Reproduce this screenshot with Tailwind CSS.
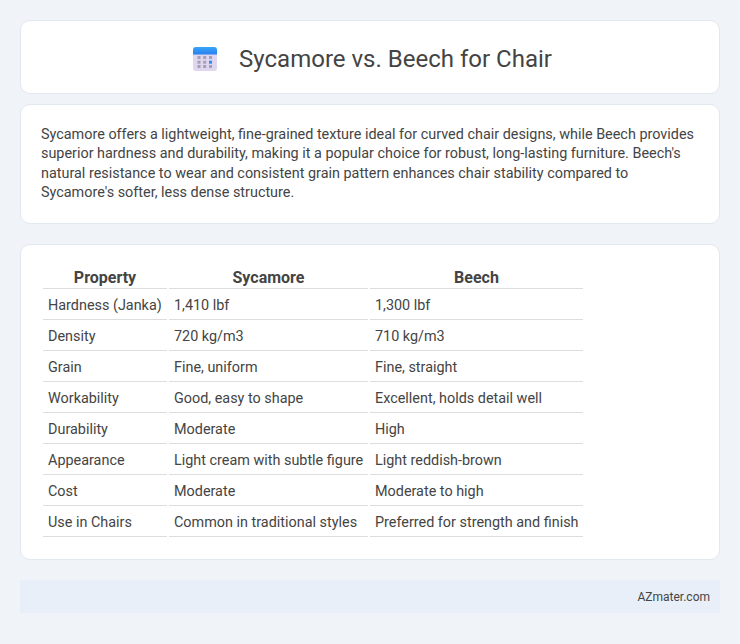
<!DOCTYPE html>
<html lang="en">
  <head>
    <meta charset="UTF-8" />
    <meta name="viewport" content="width=device-width, initial-scale=1.0" />
    <title>Sycamore vs. Beech for Chair</title>
    <script src="https://cdn.jsdelivr.net/npm/@tailwindcss/browser@4"></script>
  </head>
  <body class="bg-[#f0f4f9] font-['Roboto',sans-serif] text-[#444444] px-5 pt-5 h-[644px] overflow-hidden">
    <!-- title -->
    <div class="bg-white border border-[#e2e8f0] rounded-[10px] h-[74px] pt-1 flex items-center justify-center">
      <svg class="w-[26px] h-[26px] ml-1 mr-[21px]" viewBox="0 0 26 26">
        <defs>
          <linearGradient id="band" x1="0" y1="0" x2="0" y2="1">
            <stop offset="0" stop-color="#38a5f8" />
            <stop offset="1" stop-color="#2a7ff0" />
          </linearGradient>
        </defs>
        <rect x="1" y="1" width="24" height="24" rx="3" fill="#dfd6ef" />
        <path d="M1 8.500V4A3 3 0 0 1 4 1h18A3 3 0 0 1 25 4V8.500Z" fill="url(#band)" />
        <g fill="#a5a1b2">
          <rect x="5.500" y="10" width="3" height="3" />
          <rect x="11.200" y="10" width="3" height="3" />
          <rect x="17" y="10" width="3" height="3" />
          <rect x="5.500" y="14.700" width="3" height="3" />
          <rect x="11.200" y="14.700" width="3" height="3" />
          <rect x="17" y="14.700" width="3" height="3" fill="#2b8cf5" />
          <rect x="5.500" y="19" width="3" height="3" />
          <rect x="11.200" y="19" width="3" height="3" />
          <rect x="17" y="19" width="3" height="3" />
        </g>
      </svg>
      <h1 class="text-[24px] font-normal leading-none">Sycamore vs. Beech for Chair</h1>
    </div>

    <!-- summary -->
    <div class="bg-white border border-[#e2e8f0] rounded-[10px] mt-2.5 h-[120px] px-5 pt-5">
      <p class="text-[14.4px] leading-[19.400px]">Sycamore offers a lightweight, fine-grained texture ideal for curved chair designs, while Beech provides superior hardness and durability, making it a popular choice for robust, long-lasting furniture. Beech's natural resistance to wear and consistent grain pattern enhances chair stability compared to Sycamore's softer, less dense structure.</p>
    </div>

    <!-- comparison table -->
    <div class="bg-white border border-[#e2e8f0] rounded-[10px] mt-5 h-[316px] px-5 pt-5">
      <table class="table-fixed w-[544px] border-separate border-spacing-[2px] text-[14.4px] leading-[20px] whitespace-nowrap">
        <thead>
          <tr class="text-[16px] font-bold">
            <th class="w-[124px] h-[22px] p-0 border-b border-[#dddddd] font-bold">Property</th>
            <th class="w-[199px] p-0 border-b border-[#dddddd] font-bold">Sycamore</th>
            <th class="w-[213px] p-0 border-b border-[#dddddd] font-bold">Beech</th>
          </tr>
        </thead>
        <tbody>
          <tr>
            <td class="h-[29px] px-[5px] pt-[2px] border-b border-[#dddddd]">Hardness (Janka)</td>
            <td class="px-[5px] pt-[2px] border-b border-[#dddddd]">1,410 lbf</td>
            <td class="px-[5px] pt-[2px] border-b border-[#dddddd]">1,300 lbf</td>
          </tr>
          <tr>
            <td class="h-[29px] px-[5px] pt-[2px] border-b border-[#dddddd]">Density</td>
            <td class="px-[5px] pt-[2px] border-b border-[#dddddd]">720 kg/m3</td>
            <td class="px-[5px] pt-[2px] border-b border-[#dddddd]">710 kg/m3</td>
          </tr>
          <tr>
            <td class="h-[29px] px-[5px] pt-[2px] border-b border-[#dddddd]">Grain</td>
            <td class="px-[5px] pt-[2px] border-b border-[#dddddd]">Fine, uniform</td>
            <td class="px-[5px] pt-[2px] border-b border-[#dddddd]">Fine, straight</td>
          </tr>
          <tr>
            <td class="h-[29px] px-[5px] pt-[2px] border-b border-[#dddddd]">Workability</td>
            <td class="px-[5px] pt-[2px] border-b border-[#dddddd]">Good, easy to shape</td>
            <td class="px-[5px] pt-[2px] border-b border-[#dddddd]">Excellent, holds detail well</td>
          </tr>
          <tr>
            <td class="h-[29px] px-[5px] pt-[2px] border-b border-[#dddddd]">Durability</td>
            <td class="px-[5px] pt-[2px] border-b border-[#dddddd]">Moderate</td>
            <td class="px-[5px] pt-[2px] border-b border-[#dddddd]">High</td>
          </tr>
          <tr>
            <td class="h-[29px] px-[5px] pt-[2px] border-b border-[#dddddd]">Appearance</td>
            <td class="px-[5px] pt-[2px] border-b border-[#dddddd]">Light cream with subtle figure</td>
            <td class="px-[5px] pt-[2px] border-b border-[#dddddd]">Light reddish-brown</td>
          </tr>
          <tr>
            <td class="h-[29px] px-[5px] pt-[2px] border-b border-[#dddddd]">Cost</td>
            <td class="px-[5px] pt-[2px] border-b border-[#dddddd]">Moderate</td>
            <td class="px-[5px] pt-[2px] border-b border-[#dddddd]">Moderate to high</td>
          </tr>
          <tr>
            <td class="h-[29px] px-[5px] pt-[2px] border-b border-[#dddddd]">Use in Chairs</td>
            <td class="px-[5px] pt-[2px] border-b border-[#dddddd]">Common in traditional styles</td>
            <td class="px-[5px] pt-[2px] border-b border-[#dddddd]">Preferred for strength and finish</td>
          </tr>
        </tbody>
      </table>
    </div>

    <!-- footer -->
    <div class="bg-[#e8eff8] mt-5 h-[33px] px-2.5 flex items-center justify-end text-[12px]">AZmater.com</div>
  </body>
</html>
